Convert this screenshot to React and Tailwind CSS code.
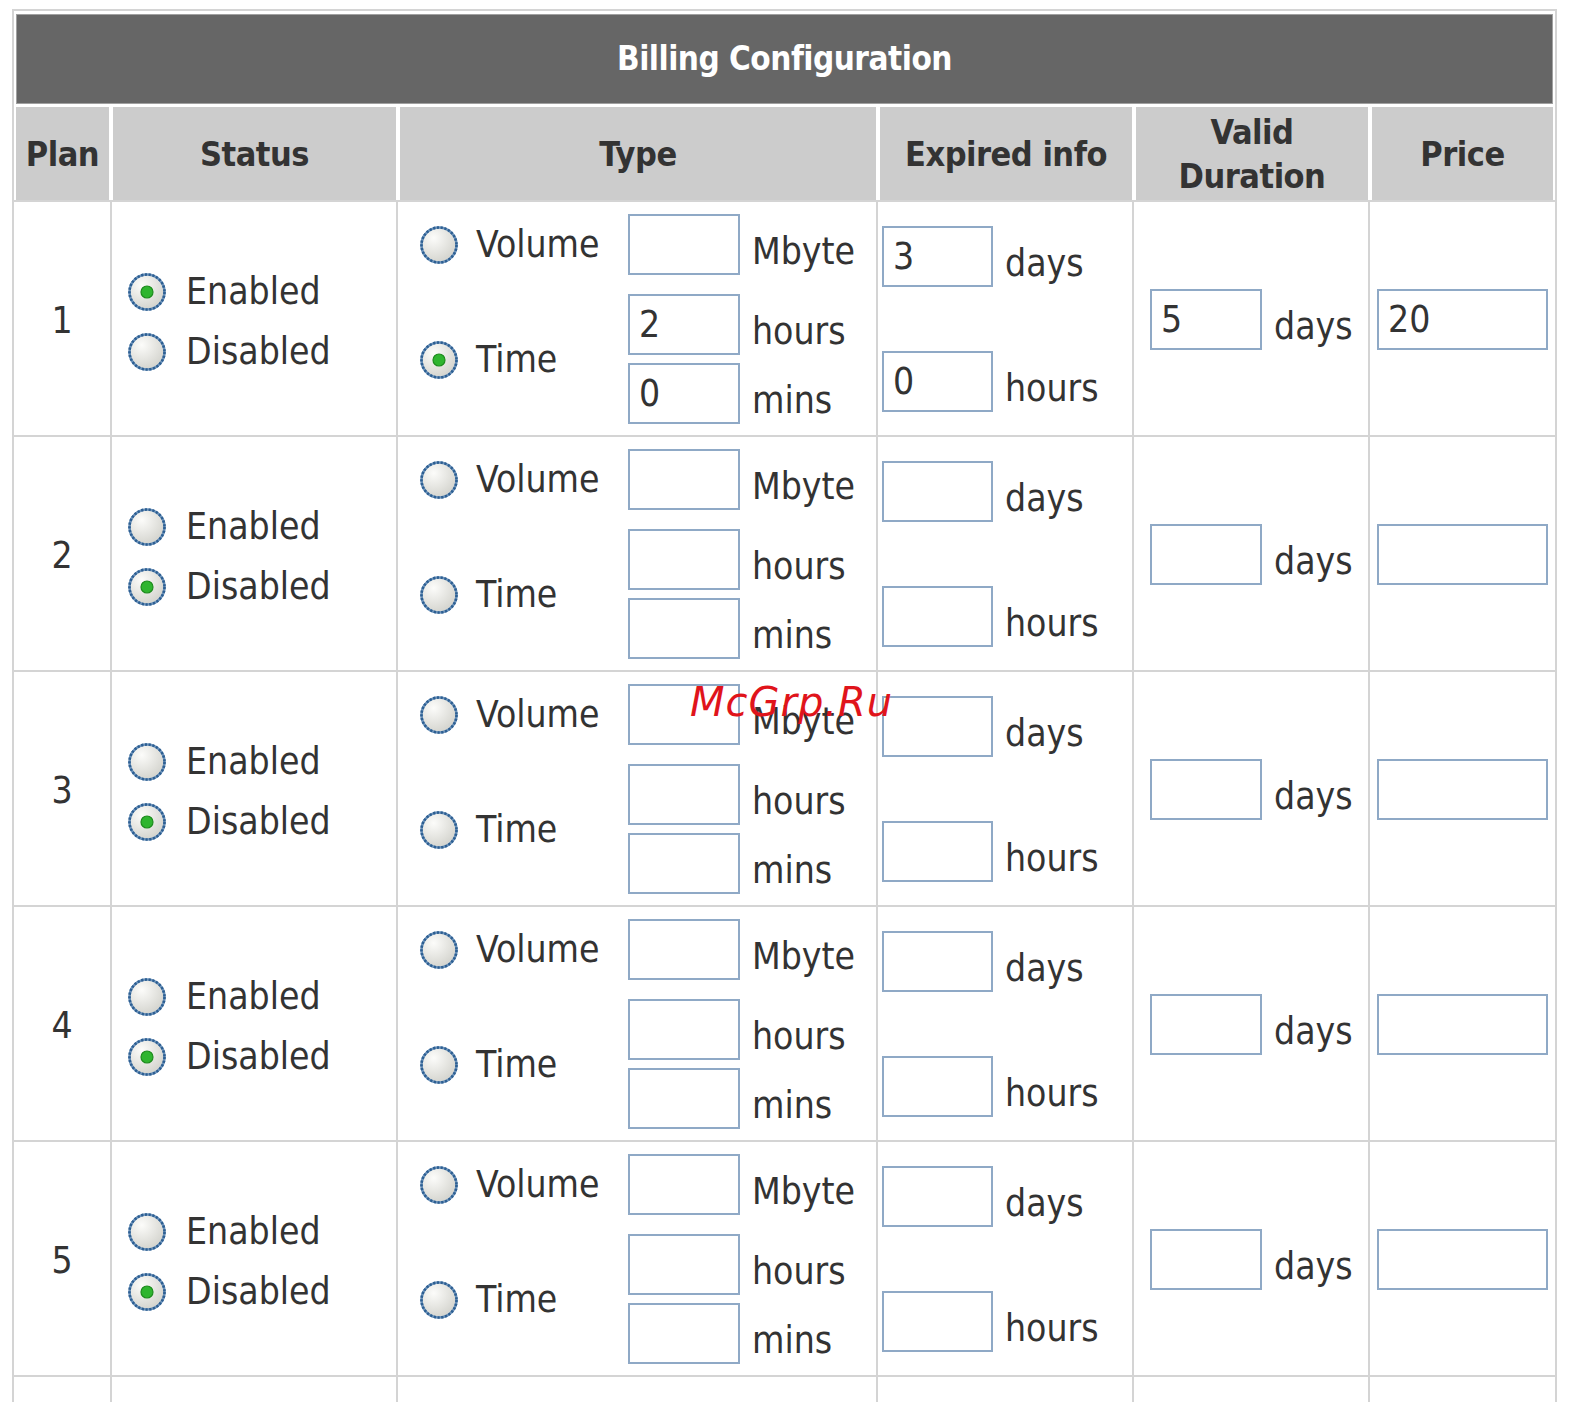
import React from "react";

const plans = [
  { id: 1, enabled: true, type: "time", mbyte: "", hours: "2", mins: "0", expDays: "3", expHours: "0", valid: "5", price: "20" },
  { id: 2, enabled: false, type: "", mbyte: "", hours: "", mins: "", expDays: "", expHours: "", valid: "", price: "" },
  { id: 3, enabled: false, type: "", mbyte: "", hours: "", mins: "", expDays: "", expHours: "", valid: "", price: "" },
  { id: 4, enabled: false, type: "", mbyte: "", hours: "", mins: "", expDays: "", expHours: "", valid: "", price: "" },
  { id: 5, enabled: false, type: "", mbyte: "", hours: "", mins: "", expDays: "", expHours: "", valid: "", price: "" },
];

const Radio = ({ checked }) => (
  <svg width="40" height="40" viewBox="0 0 40 40" className="shrink-0">
    <defs>
      <radialGradient id="radioFill" cx="35%" cy="30%" r="75%">
        <stop offset="0" stopColor="#fcfcfa" />
        <stop offset="1" stopColor="#d2d2cc" />
      </radialGradient>
    </defs>
    <circle cx="20" cy="20" r="17.5" fill="url(#radioFill)" stroke="#6d93bb" strokeWidth="2.6" />
    <circle cx="20" cy="20" r="17.5" fill="none" stroke="#2d5f92" strokeWidth="2.6" strokeDasharray="2.2 1.6" />
    {checked && <circle cx="20" cy="20" r="6" fill="#2fb52f" stroke="#1d8c1d" strokeWidth="1.2" />}
  </svg>
);

const Box = ({ value, w = "w-[112px]" }) => (
  <div className={`${w} h-[61px] border-2 border-[#8fa9c6] bg-white pl-[9px] flex items-center leading-none text-[#333]`}>
    {value}
  </div>
);

const Unit = ({ children }) => (
  <span className="ml-[12px] mb-[1px] leading-[44px] text-[#333]">{children}</span>
);

const Head = ({ children }) => (
  <div className="bg-[#cccccc] flex items-center justify-center text-center font-bold text-[#333] text-[34px] leading-[44px] tracking-[-0.5px]">
    {children}
  </div>
);

const PlanRow = ({ p }) => (
  <div className="grid grid-cols-[96px_284px_478px_254px_234px_185px] gap-[2px] h-[233px]">
    <div className="bg-white flex items-center justify-center pt-[4px] text-[#333]">{p.id}</div>

    <div className="bg-white flex flex-col justify-center pl-[15px] pt-[6px]">
      <div className="flex items-center gap-[19px] h-[60px]">
        <Radio checked={p.enabled} />
        <span className="text-[#333]">Enabled</span>
      </div>
      <div className="flex items-center gap-[19px] h-[60px]">
        <Radio checked={!p.enabled} />
        <span className="text-[#333]">Disabled</span>
      </div>
    </div>

    <div className="bg-white pt-[12px] grid grid-cols-[230px_112px_auto] grid-rows-[61px_19px_61px_8px_61px]">
      <div className="col-start-1 row-start-1 flex items-center gap-[17px] pl-[21px]">
        <Radio checked={p.type === "volume"} />
        <span className="text-[#333]">Volume</span>
      </div>
      <div className="col-start-1 row-start-3 row-span-3 flex items-center gap-[17px] pl-[21px] pt-[2px]">
        <Radio checked={p.type === "time"} />
        <span className="text-[#333]">Time</span>
      </div>
      <div className="col-start-2 row-start-1"><Box value={p.mbyte} /></div>
      <div className="col-start-3 row-start-1 flex items-end"><Unit>Mbyte</Unit></div>
      <div className="col-start-2 row-start-3"><Box value={p.hours} /></div>
      <div className="col-start-3 row-start-3 flex items-end"><Unit>hours</Unit></div>
      <div className="col-start-2 row-start-5"><Box value={p.mins} /></div>
      <div className="col-start-3 row-start-5 flex items-end"><Unit>mins</Unit></div>
    </div>

    <div className="bg-white flex flex-col justify-center gap-[64px] pl-[4px]">
      <div className="flex items-end">
        <Box value={p.expDays} w="w-[111px]" />
        <Unit>days</Unit>
      </div>
      <div className="flex items-end">
        <Box value={p.expHours} w="w-[111px]" />
        <Unit>hours</Unit>
      </div>
    </div>

    <div className="bg-white flex items-center pl-[16px] pt-[2px]">
      <div className="flex items-end">
        <Box value={p.valid} />
        <Unit>days</Unit>
      </div>
    </div>

    <div className="bg-white flex items-center pl-[7px] pt-[2px]">
      <Box value={p.price} w="w-[171px]" />
    </div>
  </div>
);

export default function App() {
  return (
    <div className="relative h-[1402px] overflow-hidden bg-white pt-[9px] pl-[12px] font-['DejaVu_Sans_Condensed','DejaVu_Sans',sans-serif] text-[37px]">
      <div className="w-[1545px] bg-[#d4d4d4] p-[2px] flex flex-col gap-[2px]">
        <div className="bg-white px-[2px] pt-[3px] flex flex-col gap-[3px]">
          <div className="h-[90px] bg-[#666666] border border-[#a0a0a0] flex items-center justify-center text-white font-bold text-[33px] tracking-[-0.5px]">
            Billing Configuration
          </div>
          <div className="grid grid-cols-[93px_283px_476px_252px_232px_181px] gap-[4px] h-[93px]">
            <Head>Plan</Head>
            <Head>Status</Head>
            <Head>Type</Head>
            <Head>Expired info</Head>
            <Head>
              Valid
              <br />
              Duration
            </Head>
            <Head>Price</Head>
          </div>
        </div>

        {plans.map((p) => (
          <PlanRow key={p.id} p={p} />
        ))}

        <div className="grid grid-cols-[96px_284px_478px_254px_234px_185px] gap-[2px] h-[233px]">
          <div className="bg-white" />
          <div className="bg-white" />
          <div className="bg-white" />
          <div className="bg-white" />
          <div className="bg-white" />
          <div className="bg-white" />
        </div>
      </div>

      <div className="absolute left-[690px] top-[672px] text-[40px] italic text-[#e0141b] font-['DejaVu_Sans',sans-serif] tracking-[1px]">
        McGrp.Ru
      </div>
    </div>
  );
}
